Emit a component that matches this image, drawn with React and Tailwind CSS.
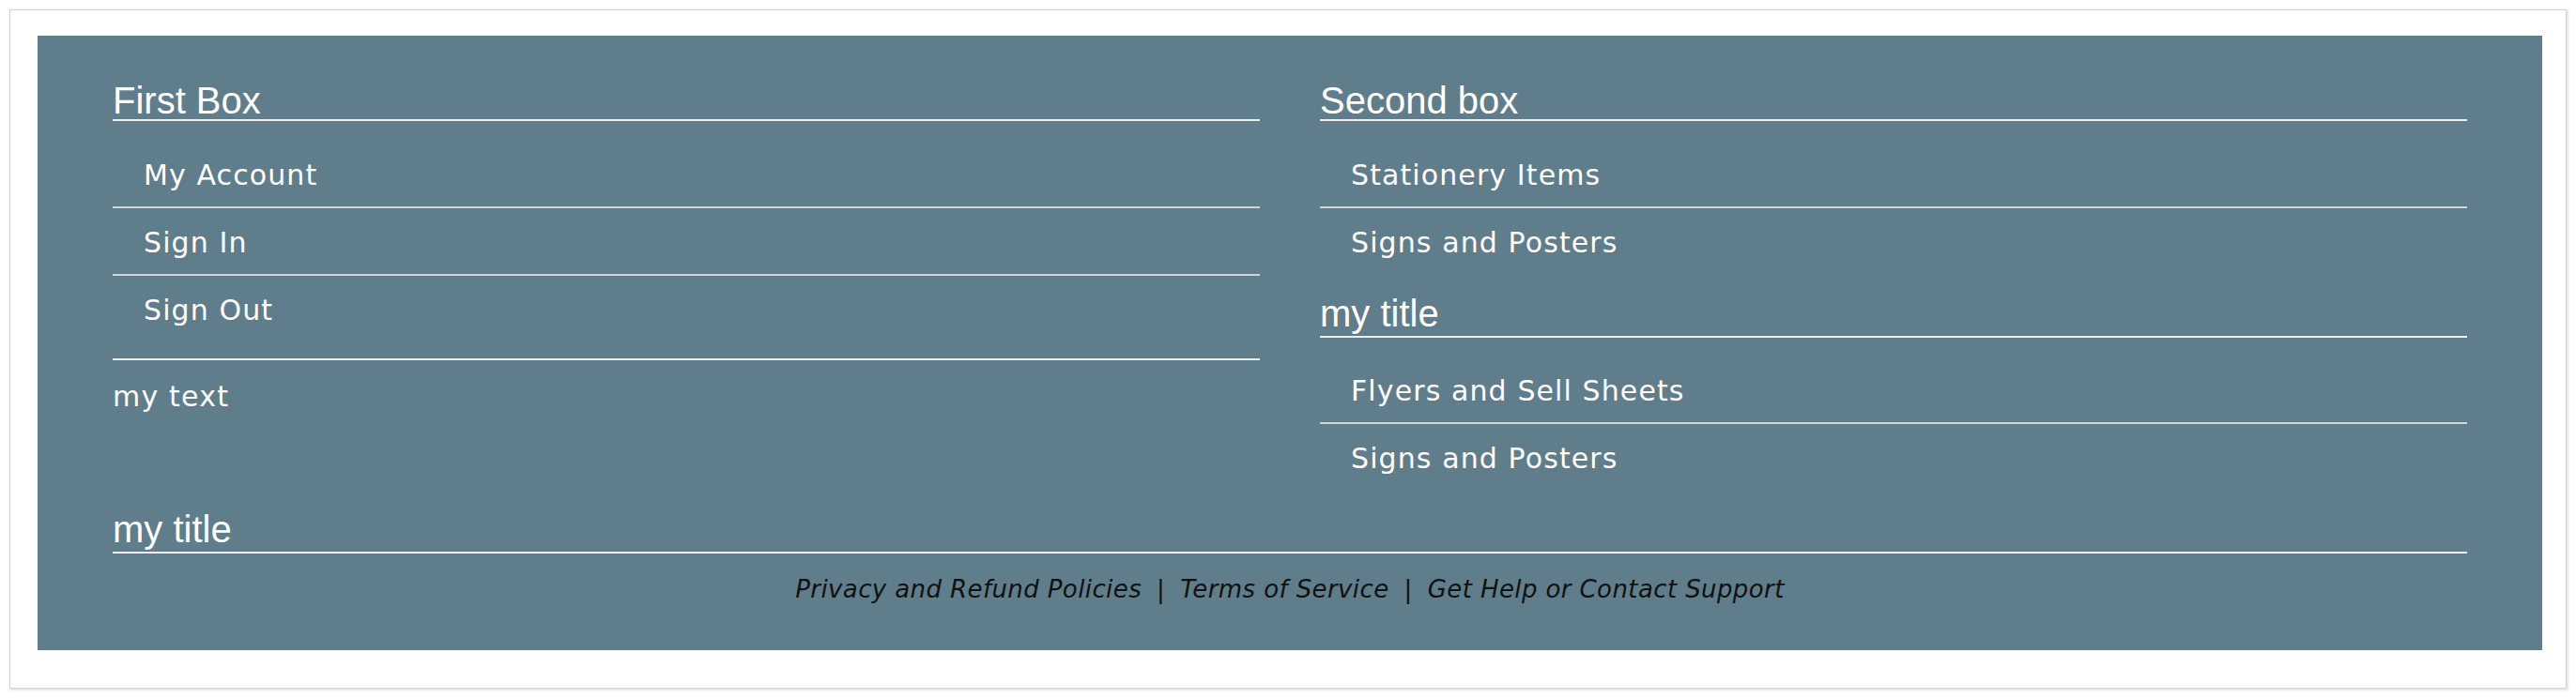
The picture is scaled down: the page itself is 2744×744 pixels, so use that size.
const LEFT_LINKS = ["My Account", "Sign In", "Sign Out"];
const RIGHT_LINKS = ["Stationery Items", "Signs and Posters"];
const RIGHT_LINKS_2 = ["Flyers and Sell Sheets", "Signs and Posters"];
const FOOTER_LINKS = ["Privacy and Refund Policies", "Terms of Service", "Get Help or Contact Support"];

const headFont = { fontFamily: '"Liberation Sans", Arial, sans-serif' };
const bodyFont = { fontFamily: 'Verdana, "DejaVu Sans", sans-serif' };

function BoxTitle({ children }) {
  return (
    <h2 className="text-[40px] leading-[40px] border-b-2 border-[#eeeeee] text-white font-normal" style={headFont}>
      {children}
    </h2>
  );
}

function SubTitle({ children, className = "" }) {
  return (
    <h3 className={`text-[40px] leading-[44px] pb-[2px] border-b-2 border-[#eeeeee] text-white font-normal ${className}`} style={headFont}>
      {children}
    </h3>
  );
}

function LinkList({ links, className = "" }) {
  return (
    <ul className={className}>
      {links.map((l, i) => (
        <li
          key={l + i}
          className={`pl-[33px] pt-[19px] pb-[15px] text-[30px] leading-[36px] tracking-[1.1px] text-white ${i < links.length - 1 ? "border-b-2 border-[#d3d7d9]" : "border-b-2 border-transparent"}`}
          style={bodyFont}
        >
          <a href="#">{l}</a>
        </li>
      ))}
    </ul>
  );
}

export default function App() {
  return (
    <div className="bg-white p-[10px] w-[2744px] h-[744px]">
      <div className="h-[724px] bg-white border border-[#d4d4d4] shadow-[1px_1px_3px_rgba(0,0,0,0.18)] pl-[29px] pr-[25px] pt-[27px]">
        <div className="bg-[#607d8b] h-[655px] px-[80px] pt-[49px]">
          <div className="grid grid-cols-2 gap-x-[64px] items-start">
            <div>
              <BoxTitle>First Box</BoxTitle>
              <div className="mt-[21px] pb-[16px] border-b-2 border-[#eeeeee]">
                <LinkList links={LEFT_LINKS} />
              </div>
              <p className="mt-[21px] text-[30px] leading-[36px] tracking-[1.2px] text-white" style={bodyFont}>my text</p>
            </div>
            <div>
              <BoxTitle>Second box</BoxTitle>
              <LinkList links={RIGHT_LINKS} className="mt-[21px]" />
              <SubTitle className="mt-[18px]">my title</SubTitle>
              <LinkList links={RIGHT_LINKS_2} className="mt-[20px]" />
            </div>
          </div>
          <SubTitle className="mt-[18px]">my title</SubTitle>
          <div className="mt-[22px] text-center text-[26px] leading-[32px] italic tracking-[0.4px] text-[#111]" style={bodyFont}>
            {FOOTER_LINKS.map((f, i) => (
              <span key={f}>
                {i > 0 && <span className="px-[16px] not-italic">|</span>}
                <a href="#">{f}</a>
              </span>
            ))}
          </div>
        </div>
      </div>
    </div>
  );
}
